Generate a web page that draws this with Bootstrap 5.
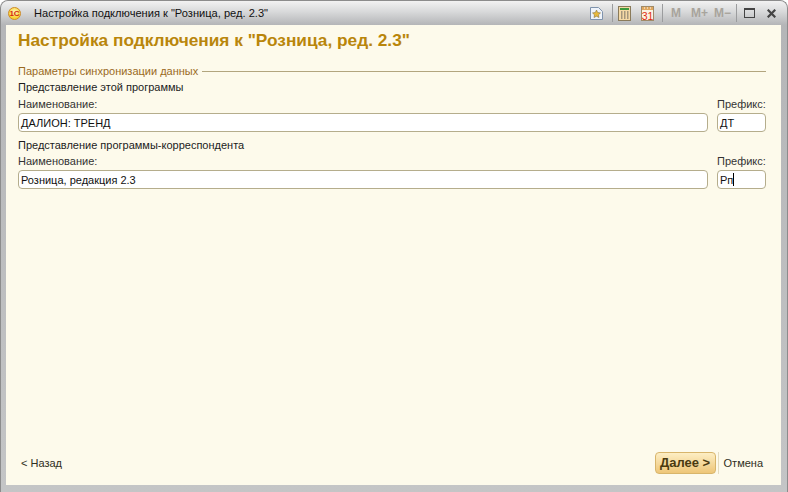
<!DOCTYPE html>
<html lang="ru">
<head>
<meta charset="UTF-8">
<title>Настройка подключения</title>
<link rel="stylesheet" href="https://cdn.jsdelivr.net/npm/bootstrap@5.3.0/dist/css/bootstrap.min.css">
<style>
html, body { height: 100%; }
body { background: #fff; font-family: "Liberation Sans", sans-serif; font-size: 11px; line-height: 13px; color: #1c1c1c; overflow: hidden; }
.win-frame { height: 492px; background: linear-gradient(#b4b5b7, #c4c5c6); border-radius: 8px 8px 0 0; border: 1px solid #8c8c8c; border-bottom: 0; padding: 0 6px 7px 5px; }
.win-title { height: 24px; margin: 0 -6px 0 -5px; padding: 0 11px 0 7px; background: linear-gradient(#f2f2f2, #d8d9da 45%, #b4b5b7); border-radius: 7px 7px 0 0; }
.app-logo { width: 13px; height: 13px; margin-right: 13px; border-radius: 50%; background: radial-gradient(circle at 50% 35%, #fff8b8, #f6d030 70%); border: 1px solid #d08a20; color: #d42a10; font: bold 8px/11px "Liberation Sans", sans-serif; text-align: center; }
.title-text { font-size: 11.100px; color: #111; }
.tool-sep { width: 1px; height: 18px; background: #9b9c9e; }
.ml5 { margin-left: 5px; }
.ml7 { margin-left: 7px; }
.ml8 { margin-left: 8px; }
.ml9 { margin-left: 9px; }
.ml10 { margin-left: 10px; }
.ml11 { margin-left: 11px; }
.ml12 { margin-left: 12px; }
.mem-key { font: bold 12px/14px "Liberation Sans", sans-serif; color: #a8a49c; text-align: center; }
.mem-m { width: 9px; }
.mem-plus { width: 16px; }
.mem-minus { width: 15px; }
.form-pane { height: 460px; background: #fdfaeb; padding: 5px 15px 0 12px; }
.form-head { font: bold 17.300px/20px "Liberation Sans", sans-serif; color: #b9860b; margin-bottom: 15px; }
.group-label { color: #9a6a1e; white-space: nowrap; }
.group-line { height: 1px; background: #b2a57e; }
.section-a { margin-top: 3px; }
.section-b { margin-top: 7px; }
.row-a { margin-top: 4px; }
.row-b { margin-top: 3px; }
.field-label { color: #333; }
.field-box { height: 19px; margin-top: 2px; border: 1px solid #b5ad8c; border-radius: 4px; background: #fff; padding: 2px; color: #111; line-height: 14px; }
.fields-row { gap: 9px; }
.prefix-col { width: 49px; flex: none; }
.text-caret { display: inline-block; width: 1px; height: 13px; background: #000; vertical-align: -2px; }
.next-btn { width: 61px; height: 22px; border: 1px solid #d8b56b; border-radius: 4px; background: linear-gradient(#fdeec4, #eec678); font: bold 13px/20px "Liberation Sans", sans-serif; color: #4a3a10; text-align: center; padding: 0; }
.btn-sep { width: 1px; height: 22px; margin: 0 5px 0 2px; background: #e4dcc0; }
.link-txt { color: #2f2f22; }
.back-link { margin-left: 3px; }
.cancel-link { margin-right: 3px; }
.foot-row { margin-bottom: 11px; }
</style>
</head>
<body>
<div class="win-frame">
  <div class="win-title d-flex align-items-center">
    <div class="app-logo">1С</div>
    <div class="title-text flex-grow-1">Настройка подключения к "Розница, ред. 2.3"</div>
    <div class="d-flex align-items-center">
      <svg width="13" height="13" viewBox="0 0 13 13"><path d="M.5.5h8l4 4v8H.5z" fill="#eef3fa" stroke="#7f93ad"/><path d="M6.500 3l1.200 2.500 2.800.4-2 1.900.5 2.700-2.500-1.300-2.500 1.300.5-2.700-2-1.900 2.800-.4z" fill="#e8b93c" stroke="#8a7440" stroke-width=".6"/></svg>
      <div class="tool-sep ml9"></div>
      <svg class="ml5" width="13" height="15" viewBox="0 0 13 15"><rect x=".5" y=".5" width="12" height="14" fill="#f4d9a5" stroke="#8a7a5a"/><rect x="2" y="2" width="9" height="2" fill="#3c9a3c"/><path d="M3 6h1.500M6 6h1.500M9 6h1.500M3 8h1.500M6 8h1.500M9 8h1.500M3 10h1.500M6 10h1.500M9 10h1.500M3 12h1.500M6 12h1.500M9 12h1.500" stroke="#555" stroke-width="1"/></svg>
      <svg class="ml10" width="13" height="15" viewBox="0 0 13 15"><rect x=".5" y=".5" width="12" height="14" fill="#fbf3e2" stroke="#a08a68"/><rect x="1" y="1" width="11" height="3" fill="#e0a860"/><path d="M3 2h1M6 2h1M9 2h1" stroke="#fff"/><text x="6.500" y="13.500" text-anchor="middle" font-family="Liberation Sans" font-size="10.500" fill="#e02a10">31</text></svg>
      <div class="tool-sep ml8"></div>
      <span class="mem-key mem-m ml8">M</span>
      <span class="mem-key mem-plus ml11">M+</span>
      <span class="mem-key mem-minus ml7">M−</span>
      <div class="tool-sep ml7"></div>
      <svg class="ml7" width="11" height="10" viewBox="0 0 11 10"><rect x=".5" y="1" width="10" height="8.500" fill="none" stroke="#444"/><path d="M0 1h11" stroke="#444" stroke-width="2"/></svg>
      <svg class="ml12" width="9" height="9" viewBox="0 0 9 9"><path d="M.7.7l7.600 7.600M8.300.7L.7 8.300" stroke="#444" stroke-width="2.200"/></svg>
    </div>
  </div>
  <div class="form-pane d-flex flex-column">
    <div class="form-head">Настройка подключения к "Розница, ред. 2.3"</div>
    <div class="d-flex align-items-center gap-1"><span class="group-label">Параметры синхронизации данных</span><div class="group-line flex-grow-1"></div></div>
    <div class="section-a">Представление этой программы</div>
    <div class="d-flex fields-row row-a">
      <div class="flex-grow-1"><div class="field-label">Наименование:</div><div class="field-box">ДАЛИОН: ТРЕНД</div></div>
      <div class="prefix-col"><div class="field-label">Префикс:</div><div class="field-box">ДТ</div></div>
    </div>
    <div class="section-b">Представление программы-корреспондента</div>
    <div class="d-flex fields-row row-b">
      <div class="flex-grow-1"><div class="field-label">Наименование:</div><div class="field-box">Розница, редакция 2.3</div></div>
      <div class="prefix-col"><div class="field-label">Префикс:</div><div class="field-box">Рп<span class="text-caret"></span></div></div>
    </div>
    <div class="d-flex align-items-center mt-auto foot-row">
      <span class="link-txt back-link flex-grow-1">&lt; Назад</span>
      <button type="button" class="next-btn">Далее &gt;</button>
      <div class="btn-sep"></div>
      <span class="link-txt cancel-link">Отмена</span>
    </div>
  </div>
</div>
<script src="https://cdn.jsdelivr.net/npm/bootstrap@5.3.0/dist/js/bootstrap.bundle.min.js"></script>
</body>
</html>
